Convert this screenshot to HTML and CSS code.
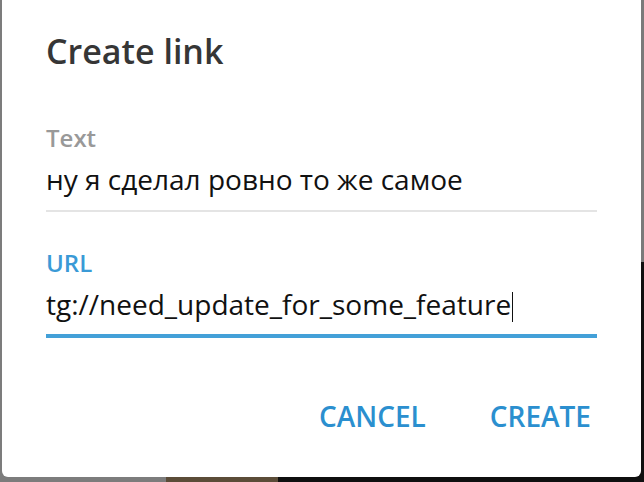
FILE: index.html
```html
<!DOCTYPE html>
<html lang="ru">
  <head>
    <meta charset="UTF-8" />
    <meta name="viewport" content="width=device-width, initial-scale=1.0" />
    <title>Create link</title>
    <link rel="stylesheet" href="styles.css">
  </head>
  <body>
    <div class="screen">
      <div class="dialog">
        <h1>Create link</h1>

        <div class="field">
          <label class="field-label">Text</label>
          <div class="field-input">ну я сделал ровно то же самое</div>
        </div>

        <div class="field field-active">
          <label class="field-label">URL</label>
          <div class="field-input">tg://need_update_for_some_feature<span class="caret"></span></div>
        </div>

        <div class="buttons">
          <button>CANCEL</button>
          <button>CREATE</button>
        </div>
      </div>
    </div>
  </body>
</html>
```

FILE: styles.css
```css
body {
  margin: 0;
  padding: 0;
  font-family: "Open Sans", "Noto Sans", sans-serif;
}

.screen {
  height: 482px;
  overflow: hidden;
  background:
    linear-gradient(to bottom, #7a7a7a 0 262px, #101010 262px) right top / 3px 100% no-repeat,
    linear-gradient(to right, #7c7c7c 0 166px, #5b4c38 166px 278px, #0f0f0f 278px);
}

.dialog {
  margin: 0 3px 0 2px;
  height: 477px;
  box-sizing: border-box;
  background-color: #fff;
  border-radius: 0 0 6px 6px;
  padding: 27px 44px 0 44px;
}

h1 {
  margin: 0;
  font-size: 34px;
  line-height: 48px;
  font-weight: 600;
  color: #363636;
}

.field {
  margin-top: 47px;
  padding-bottom: 11px;
  border-bottom: 2px solid #e4e4e4;
}

.field + .field {
  margin-top: 35px;
}

.field-label {
  display: block;
  font-size: 24px;
  line-height: 32px;
  font-weight: 600;
  color: #999;
}

.field-input {
  margin-top: 5px;
  font-size: 28px;
  line-height: 40px;
  color: #111;
  white-space: nowrap;
}

.field-active {
  padding-bottom: 10px;
  border-bottom: 4px solid #43a0d8;
}

.field-active .field-label {
  color: #3a9ad6;
}

.caret {
  display: inline-block;
  width: 1px;
  height: 30px;
  margin-left: 1px;
  background-color: #111;
  vertical-align: -7px;
}

.buttons {
  display: flex;
  justify-content: flex-end;
  gap: 64px;
  margin-top: 60px;
  padding-right: 6px;
}

button {
  padding: 0;
  background: none;
  border: none;
  font-family: inherit;
  font-size: 28px;
  line-height: 36px;
  font-weight: 600;
  color: #2b8fcf;
  cursor: pointer;
}
```
